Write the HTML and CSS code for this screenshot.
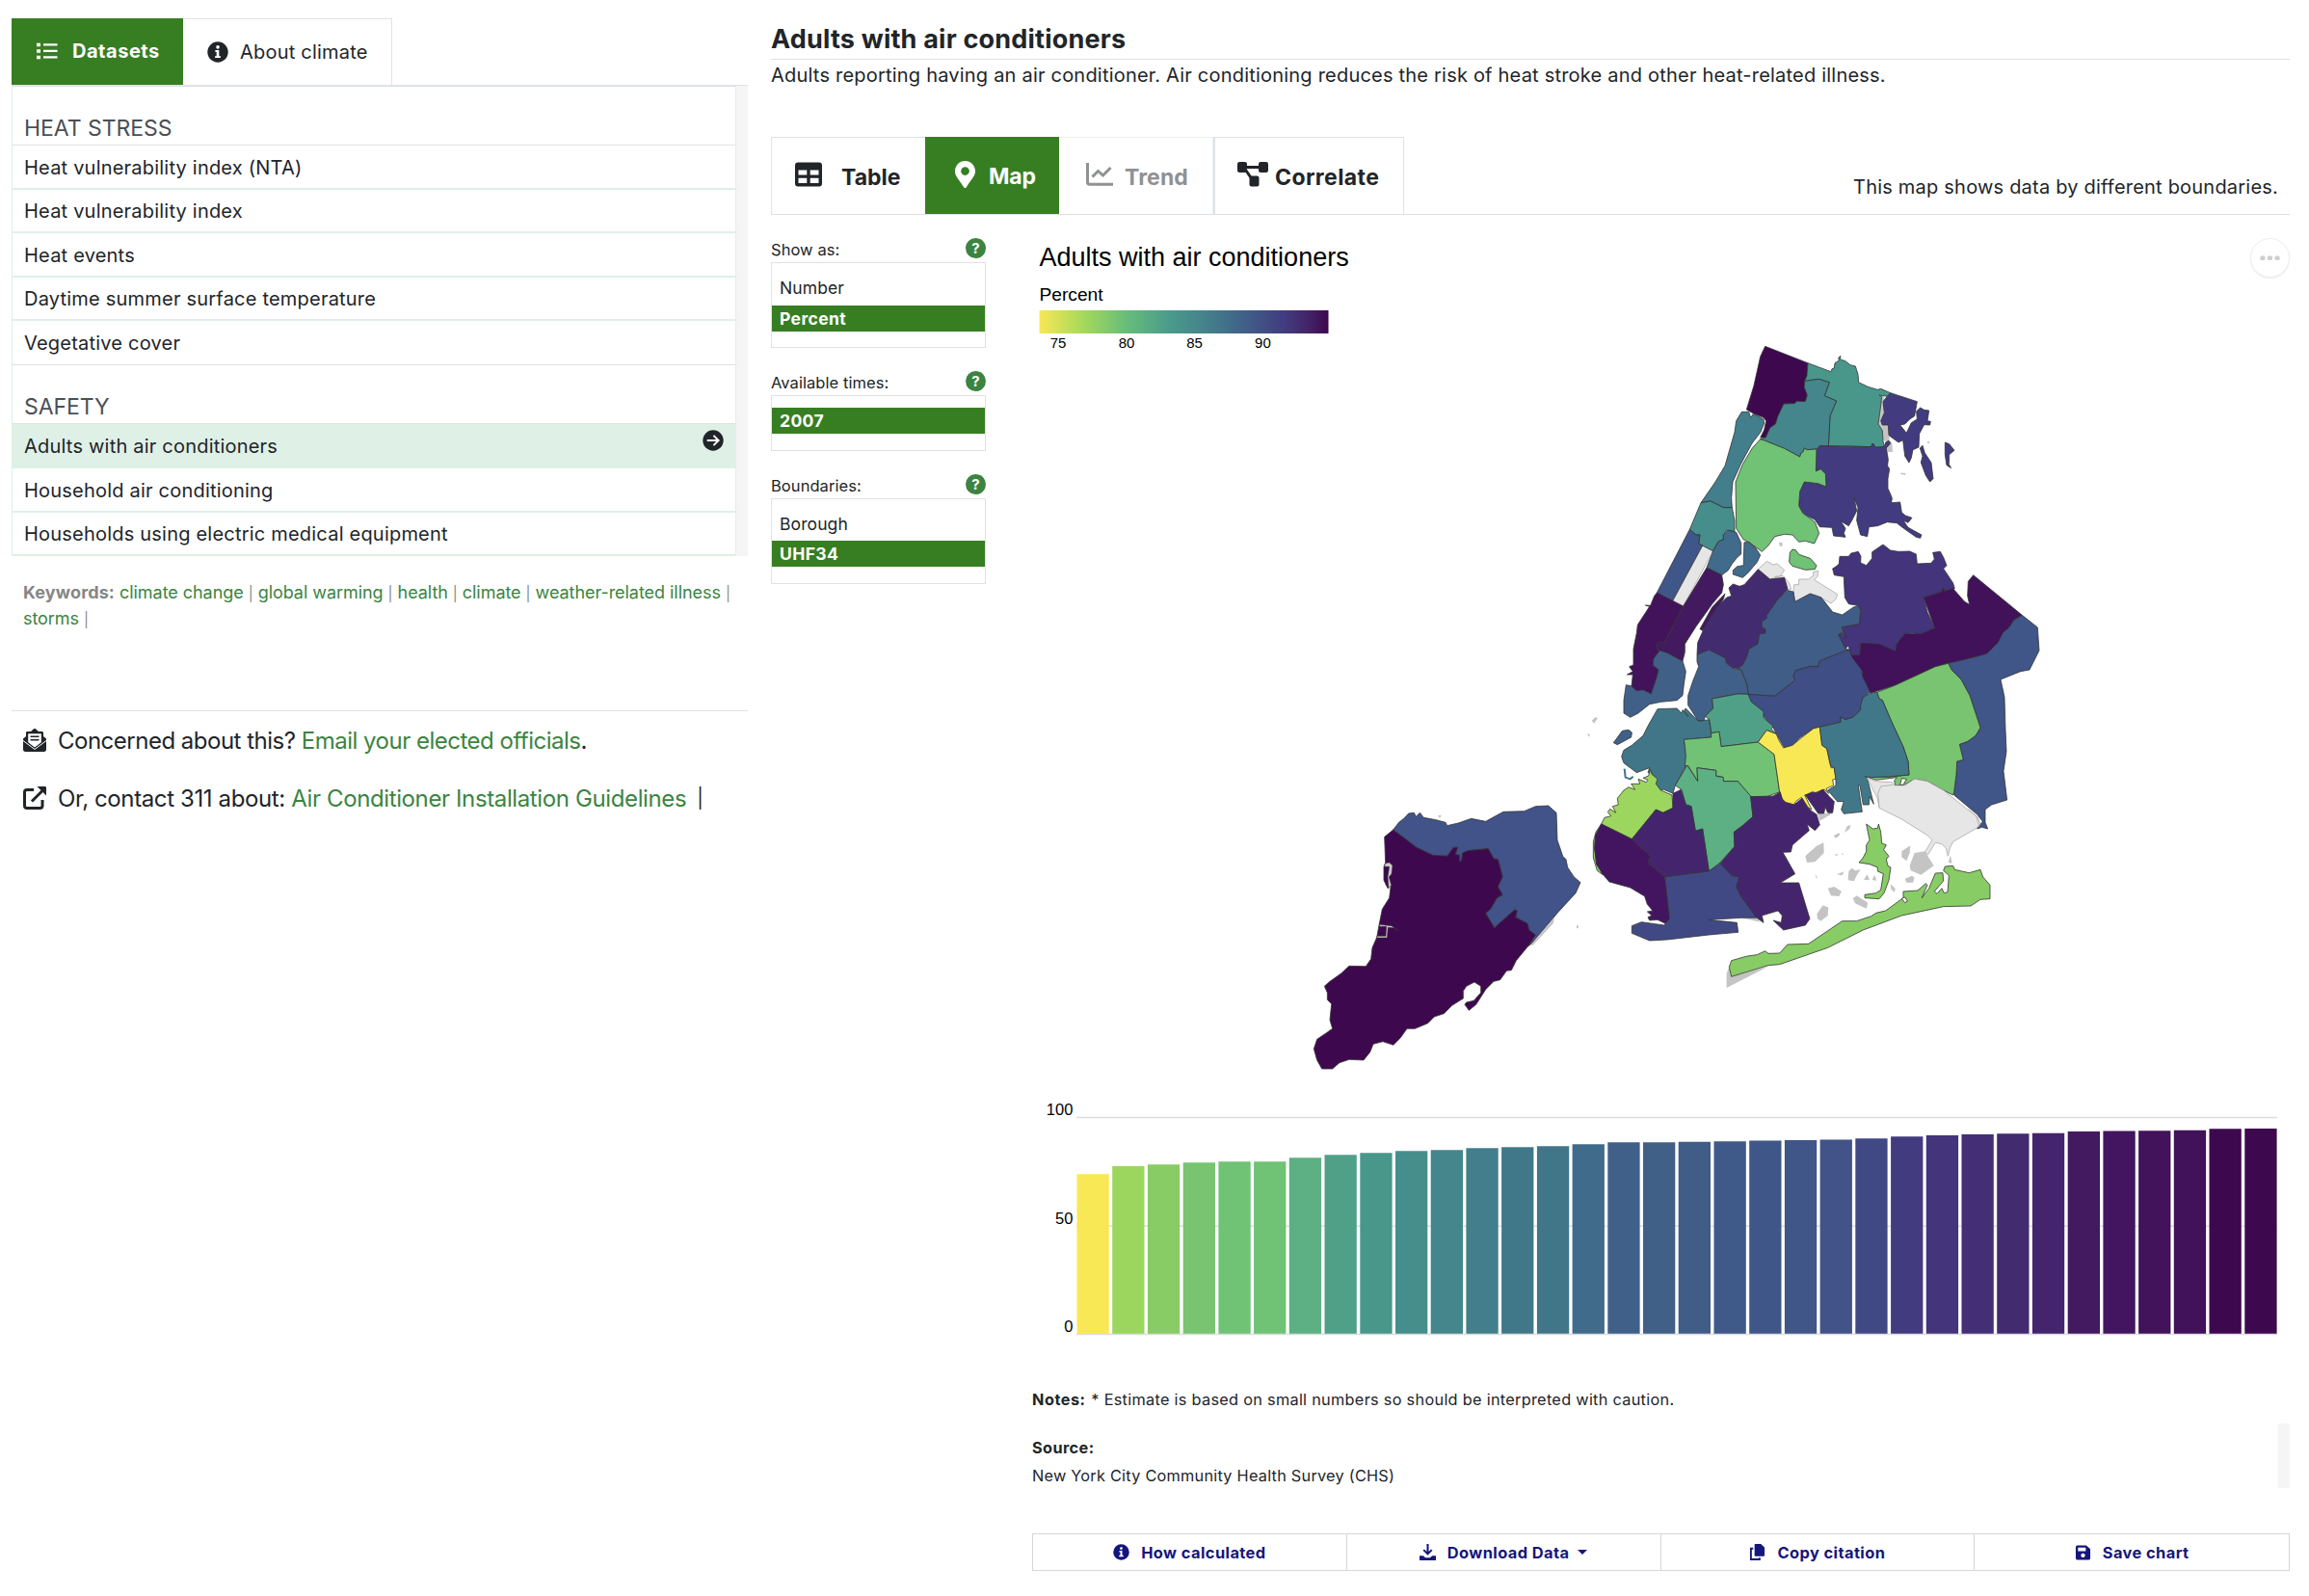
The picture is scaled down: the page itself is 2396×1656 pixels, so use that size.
FILE: index.html
```html
<!DOCTYPE html>
<html lang="en">
<head>
<meta charset="utf-8">
<title>Adults with air conditioners</title>
<link rel="stylesheet" href="styles.css">
</head>
<body>
<aside class="sidebar">
  <nav class="side-tabs">
    <a class="side-tab side-tab-active"><svg class="ic-list" viewBox="0 0 22 18"><path d="M0 .7h4v3.500H0zM0 7.200h4v3.500H0zM0 13.800h4v3.500H0zM7 1.200h14.500v2.300H7zM7 7.800h14.500v2.300H7zM7 14.300h14.500v2.300H7z" fill="currentColor"/></svg><span>Datasets</span></a>
    <a class="side-tab"><svg class="ic-info" viewBox="0 0 22 22"><circle cx="11" cy="11" r="10.7" fill="currentColor"/><path d="M8.4 9h3.900v6.200h1.600v1.900H8.100v-1.900h1.600v-4.300H8.400z" fill="#fff"/><circle cx="11" cy="5.9" r="1.8" fill="#fff"/></svg><span>About climate</span></a>
  </nav>
  <div class="dataset-scroll">
    <div class="dataset-list">
      <h4>HEAT STRESS</h4>
      <a class="row"><span>Heat vulnerability index (NTA)</span></a>
      <a class="row"><span>Heat vulnerability index</span></a>
      <a class="row"><span>Heat events</span></a>
      <a class="row"><span>Daytime summer surface temperature</span></a>
      <a class="row row-last"><span>Vegetative cover</span></a>
      <h4>SAFETY</h4>
      <a class="row row-active"><span>Adults with air conditioners</span><svg class="ic-go" viewBox="0 0 22 22"><circle cx="11" cy="11" r="10.7" fill="currentColor"/><path d="M4.700 11h11.500M11.400 5.900l5.200 5.100-5.200 5.100" fill="none" stroke="#fff" stroke-width="2"/></svg></a>
      <a class="row"><span>Household air conditioning</span></a>
      <a class="row"><span>Households using electric medical equipment</span></a>
    </div>
  </div>
  <p class="keywords"><b>Keywords:</b> <a>climate change</a> <i>|</i> <a>global warming</a> <i>|</i> <a>health</a> <i>|</i> <a>climate</a> <i>|</i> <a>weather-related illness</a> <i>|</i><br><a>storms</a> <i>|</i></p>
  <div class="contact">
    <p><svg class="ic-contact" viewBox="0 0 24 24"><path d="M0 10.4 3 8V4.500C3 3.300 3.800 3 4.600 3H8c1.200-.9 2.500-3 4-3s2.800 2.100 4 3h3.400c.8 0 1.600.3 1.600 1.500V8l3 2.400V21.500c0 1.500-.8 2.500-2.300 2.500H2.300C.8 24 0 23 0 21.500z" fill="currentColor"/><path d="M5.200 5.200h13.600v9L12 19.500l-6.800-5.300z" fill="#fff"/><path d="M7.500 8.200h9M7.500 11.800h9" stroke="currentColor" stroke-width="1.600"/><path d="m0 12.500 12 9 12-9" fill="none" stroke="#fff" stroke-width="1"/></svg><span>Concerned about this? <a>Email your elected officials</a>.</span></p>
    <p><svg class="ic-contact" viewBox="0 0 24 24"><path d="M11 3.500H4C2.300 3.500 1.500 4.400 1.500 6v14c0 1.700.8 2.500 2.500 2.500h13.500c1.700 0 2.500-.8 2.500-2.500v-6" fill="none" stroke="currentColor" stroke-width="3"/><path d="M9 15.500 20 4.500" stroke="currentColor" stroke-width="3"/><path d="M14.500 0h8C23.500 0 24 .6 24 1.500v8z" fill="currentColor"/></svg><span>Or, contact 311 about: <a>Air Conditioner Installation Guidelines</a></span><span class="bar">|</span></p>
  </div>
</aside>
<main class="main">
  <h1>Adults with air conditioners</h1>
  <p class="desc">Adults reporting having an air conditioner. Air conditioning reduces the risk of heat stroke and other heat-related illness.</p>
  <nav class="view-tabs">
    <a class="vt vt-table"><svg viewBox="0 0 28 26"><path fill-rule="evenodd" fill="currentColor" d="M3 .5h22a3 3 0 0 1 3 3v19a3 3 0 0 1-3 3H3a3 3 0 0 1-3-3v-19a3 3 0 0 1 3-3zM3.500 8.500v5h8.800v-5zM15.700 8.500v5h8.800v-5zM3.500 16.800V22h8.800v-5.200zM15.700 16.800V22h8.800v-5.200z"/></svg><span>Table</span></a>
    <a class="vt vt-map"><svg viewBox="0 0 384 512"><path fill="currentColor" d="M172.268 501.670C26.970 291.031 0 269.413 0 192 0 85.961 85.961 0 192 0s192 85.961 192 192c0 77.413-26.970 99.031-172.268 309.670-9.535 13.774-29.930 13.773-39.464 0zM192 272c44.183 0 80-35.817 80-80s-35.817-80-80-80-80 35.817-80 80 35.817 80 80 80z"/></svg><span>Map</span></a>
    <a class="vt vt-trend"><svg viewBox="0 0 28 24"><path d="M1.500 0v20c0 1.600.8 2.300 2.300 2.300H28" fill="none" stroke="currentColor" stroke-width="3"/><path d="m6.500 14.500 6-6 5 4.500L25.500 5" fill="none" stroke="currentColor" stroke-width="3"/></svg><span>Trend</span></a>
    <a class="vt vt-corr"><svg viewBox="0 0 32 26"><path d="M6 5.500h20M7 6l9.500 14" stroke="currentColor" stroke-width="3"/><rect y="0" width="10" height="11" rx="2.200" fill="currentColor"/><rect x="22" width="10" height="11" rx="2.200" fill="currentColor"/><rect x="12.500" y="14.500" width="10" height="11" rx="2.200" fill="currentColor"/></svg><span>Correlate</span></a>
    <span class="tab-note">This map shows data by different boundaries.</span>
  </nav>
  <div class="view">
    <div class="controls">
      <section><header><span>Show as:</span><i class="help">?</i></header><ul><li>Number</li><li class="sel">Percent</li></ul></section>
      <section class="times"><header><span>Available times:</span><i class="help">?</i></header><ul><li class="sel">2007</li></ul></section>
      <section class="bounds"><header><span>Boundaries:</span><i class="help">?</i></header><ul><li>Borough</li><li class="sel">UHF34</li></ul></section>
    </div>
    <div class="chart">
      <button class="menu"><svg viewBox="0 0 22 6"><circle cx="3" cy="3" r="2.800"/><circle cx="11" cy="3" r="2.800"/><circle cx="19" cy="3" r="2.800"/></svg></button>
      <svg class="viz" viewBox="1071 240 1305 1160">
        <defs><linearGradient id="ramp"><stop offset="0" stop-color="#f9e855"/><stop offset=".15" stop-color="#a6d95a"/><stop offset=".3" stop-color="#68bd7a"/><stop offset=".45" stop-color="#4a9b8a"/><stop offset=".6" stop-color="#437c8b"/><stop offset=".72" stop-color="#405d88"/><stop offset=".85" stop-color="#423b80"/><stop offset=".93" stop-color="#432468"/><stop offset="1" stop-color="#3e084f"/></linearGradient></defs>
        <text class="vz-title" x="1078.500" y="276">Adults with air conditioners</text>
        <text class="vz-sub" x="1078.500" y="312">Percent</text>
        <rect x="1078.500" y="322" width="300" height="24" fill="url(#ramp)"/>
        <g class="ticks"><text x="1098" y="361">75</text><text x="1169" y="361">80</text><text x="1239.500" y="361">85</text><text x="1310.400" y="361">90</text></g>

        <g class="land" transform="translate(1800 340) scale(.33333)">
          <path class="rock" d="M458 212 466 215 466 285 478 303 482 350 490 360 492 387 475 387 472 355 462 350 460 318 447 300 454 250zM138 668 148 668 149 680 140 680zM516 452 532 453 532 458 518 457zM600 354 607 355 606 360 600 359z"/>
          <path fill="#3e084f" d="M95 58 228 110 225 150 218 166 217 185 226 210 220 230 193 229 187 236 153 237 135 275 127 300 110 312 97 342 80 342 92 318 98 290 90 280 60 268 37 255 60 180 80 90z"/>
          <path fill="#48978a" d="M228 110 300 137 303 128 310 126 312 110 325 102 323 94 330 88 328 98 345 104 360 116 376 120 384 145 386 170 415 184 445 193 455 190 485 203 475 214 450 210 458 215 454 250 447 300 460 320 462 352 466 370 440 373 430 360 424 371 360 369 292 368 297 275 317 228 280 212 295 170 262 160 218 166 225 150z"/>
          <path fill="#44868c" d="M218 166 262 160 295 170 280 212 317 228 297 275 292 368 265 368 255 378 225 380 217 375 213 387 207 390 203 402 155 376 95 352 80 356 80 346 97 342 110 312 127 300 135 275 153 237 187 236 193 229 220 230 226 210 217 185z"/>
          <path fill="#423b80" d="M485 203 568 230 560 275 545 285 530 300 515 303 535 328 550 296 568 285 566 260 578 249 590 256 605 258 600 290 610 292 608 303 590 302 575 330 573 372 555 380 550 405 543 420 530 400 524 350 510 357 480 335 478 303 460 303 455 290 466 265 462 230 475 214zM585 367 592 390 612 420 615 445 618 470 608 480 595 460 580 420 585 400 577 375zM655 357 668 362 684 382 668 395 667 425 674 437 660 428 655 395z"/>
          <path fill="#423b80" d="M265 368 424 371 430 360 440 373 466 370 470 357 480 352 485 360 472 375 478 410 476 430 482 440 477 470 477 500 490 530 488 545 515 543 520 575 532 585 552 592 540 607 525 600 540 622 582 645 578 655 565 652 520 620 505 608 475 605 445 617 418 620 413 650 392 645 380 600 384 560 372 530 380 570 365 600 355 617 330 602 345 625 340 640 345 652 308 648 303 622 265 620 250 598 215 580 200 555 203 510 217 480 260 485 285 495 280 455 268 440 253 447 253 385z"/>
          <path fill="#70c275" d="M80 347 95 352 155 376 203 402 207 390 213 387 217 375 225 380 255 378 253 447 268 440 283 455 285 495 260 485 217 480 203 510 200 555 212 577 250 605 263 640 248 672 220 664 200 667 180 645 155 643 125 650 105 678 85 697 45 668 28 660 5 625 3 480 25 425 55 375z"/>
          <path fill="#70c275" d="M180 690 190 692 200 706 235 718 255 740 250 752 220 754 180 742 170 730 172 700z"/>
          <path fill="#427e8b" d="M22 262 44 262 50 280 58 268 90 285 92 297 81 325 54 360 19 425-6 480-10 530-8 560-35 560-75 540-105 545-60 480-30 430 0 325 5 290z"/>
          <path fill="#43347b" d="M305 750 318 742 325 735 327 712 355 712 363 702 385 697 393 712 392 732 410 740 428 718 428 698 462 675 485 693 510 697 545 696 565 705 568 735 612 733 622 720 617 700 640 697 650 715 660 740 650 750 680 795 685 812 654 820 650 810 644 822 588 840 600 885 623 935 580 955 555 950 530 952 502 985 500 1007 478 1003 430 985 390 983 392 1020 360 1020 355 990 345 1000 323 955 335 950 347 965 333 932 388 922 392 880 385 865 355 860 343 840 340 775 310 770z"/>
        </g>

        <g class="land" transform="translate(1900 540) scale(.33333)">
          <path fill="#41115a" d="M92 382 150 385 200 407 203 385 230 352 280 353 323 335 288 240 344 222 350 210 354 220 380 212 415 252 431 262 425 235 427 190 443 170 595 295 570 310 553 335 535 350 520 380 485 415 450 425 365 445 325 455 200 513 123 538 97 490 97 470 75 445 62 420 90 420z"/>
          <path fill="#405588" d="M595 295 643 333 648 405 618 465 590 470 528 495 540 550 543 650 546 720 537 780 548 870 500 885 480 900 480 940 488 960 470 955 455 960 472 937 455 915 383 855 383 845 390 790 392 750 412 745 400 697 425 688 450 670 465 645 432 545 405 495 385 480 365 445 450 425 485 415 520 380 535 350 553 335 570 310z"/>
          <path fill="#78c470" d="M143 535 200 513 325 455 365 445 375 465 405 495 432 545 465 645 450 670 425 688 400 697 412 745 392 750 390 790 383 845 380 855 350 840 300 812 260 805 230 822 200 825 197 810 205 800 140 808 105 796 180 799 243 792 240 750 225 705 190 630 160 560 150 555z"/>
        </g>

        <g class="land" transform="translate(1660 540) scale(.33333)">
          <path class="park" d="M493 152 520 127 540 138 553 135 575 155 560 175 530 183zM605 200 620 200 620 183 650 183 665 172 665 160 680 157 678 175 668 185 740 230 735 245 720 258 705 250 680 235 655 228 607 253 603 215zM545 175 570 172 590 195 596 215 585 217 580 195z"/>
          <path class="park" d="M320 78 353 95 260 267 228 250z"/>
          <path fill="#468e8b" d="M280 28 300 45 312 45 308 72 352 95 370 65 385 60 385 45 395 30 420 35 420 0 412-40 385-40 345-60 315-55z"/>
          <path fill="#3f5788" d="M280 28 300 45 312 45 308 72 320 78 227 250 178 225z"/>
          <path fill="#406b8b" d="M353 95 370 65 385 60 385 45 400 30 425 37 440 70 440 105 428 115 412 135 400 155 380 170 333 147zM450 68 465 68 485 85 500 108 490 130 460 165 445 178 415 168 415 155 428 143 448 140 448 115z"/>
          <path fill="#43195f" d="M333 147 380 170 385 200 380 225 350 260 300 330 265 385 265 410 258 438 215 415 187 405 178 400 180 380 200 380 220 345 260 267zM390 228 385 245 320 343 312 338 350 270z"/>
          <path fill="#42135b" d="M178 225 260 267 220 345 200 380 180 380 178 400 187 405 168 430 166 450 183 465 177 490 160 540 135 528 115 530 98 525 103 480 85 480 103 470 92 455 105 450 105 400 115 350 118 325 155 268 142 264 158 265 170 235z"/>
          <path fill="#406088" d="M187 405 205 410 258 438 268 470 262 510 258 545 240 560 190 565 155 572 120 600 95 613 75 600 75 560 82 512 98 515 115 530 135 528 160 540 177 490 183 465 166 450 168 430zM90 652 100 660 98 675 55 698 43 692 70 655z"/>
          <path fill="#432b70" d="M493 152 530 183 575 178 585 215 555 245 520 295 520 305 505 315 505 330 517 340 515 352 498 352 492 385 465 400 458 425 452 445 435 458 415 460 395 445 390 428 340 403 303 418 305 380 330 325 365 270 395 240 410 235 402 210 415 198 435 205 450 200z"/>
          <path fill="#405d88" d="M585 218 603 222 608 253 655 228 690 240 725 285 755 294 790 270 805 265 812 280 808 322 753 332 767 365 756 348 743 355 765 400 775 402 685 437 680 455 655 455 610 467 603 485 608 498 545 547 462 541 458 510 440 465 425 460 440 458 458 425 465 400 492 385 498 352 515 352 517 340 505 330 505 315 520 305 520 295 555 245z"/>
          <path fill="#404e86" d="M462 541 545 547 608 498 603 485 610 467 655 455 680 455 685 437 777 402 785 425 815 465 818 485 842 535 820 550 820 565 812 590 790 612 765 620 750 612 750 628 685 643 665 648 625 675 600 700 575 708 553 670 540 645 510 610 508 595 470 565z"/>
          <path fill="#40608a" d="M303 418 340 403 390 428 395 445 415 460 440 465 458 510 462 541 430 540 350 555 353 585 328 610 325 622 307 625 275 575 275 545 290 500 308 455 303 440z"/>
          <path fill="#50a088" d="M350 555 430 540 462 541 472 565 510 595 510 615 540 640 535 650 550 665 520 653 493 690 378 704 372 658 347 662 342 620 328 610 353 585z"/>
          <path fill="#417689" d="M180 587 240 585 255 600 258 590 275 610 262 592 268 585 307 625 340 620 347 662 347 675 262 682 265 700 270 735 268 765 235 825 228 850 200 838 187 838 175 820 165 790 150 785 155 770 115 785 75 755 68 735 75 715 100 700 135 670 150 640z"/>
          <path fill="#71c275" d="M262 682 347 675 347 662 372 658 378 704 493 690 543 728 560 845 520 860 470 860 430 812 385 812 382 798 362 795 362 778 303 770 305 812 275 763 265 765 268 735 265 700z"/>
          <path fill="#f9e855" d="M520 653 550 665 558 685 572 708 600 700 630 675 665 648 685 643 692 700 707 710 715 750 720 770 730 770 735 805 725 807 728 825 705 835 713 850 700 838 670 848 638 855 660 900 650 895 628 862 610 875 605 885 575 877 565 860 560 845 543 728 493 690z"/>
          <path fill="#417889" d="M685 643 750 628 750 612 765 620 790 612 812 590 812 575 820 550 850 535 863 535 870 555 880 560 910 630 945 705 960 750 963 792 905 797 845 800 825 797 833 803 853 883 840 860 838 885 820 885 810 825 805 825 817 907 760 913 752 900 760 875 740 875 710 840 735 825 735 805 730 770 720 765 707 710 692 700z"/>
          <path class="hook" d="M77 773 80 800 95 805 104 797"/>
        </g>

        <g class="land" transform="translate(1640 720) scale(.33333)">
          <path class="rock" d="M35 83 47 72 54 76 42 92zM20 124 30 126 28 134zM738 372 785 372 745 395zM500 697 545 697 560 710z"/>
          <path fill="#9cd65e" d="M218 235 222 250 240 265 235 280 250 300 285 315 288 355 257 370 235 360 160 452 65 405 75 385 95 380 85 368 92 358 110 370 100 350 118 345 115 325 135 300 150 290 170 298 158 280 185 280 180 265 205 275 210 268 195 262 212 255z"/>
          <path fill="#5cb083" d="M332 222 365 272 363 230 422 238 422 256 445 260 445 272 490 272 530 318 537 382 505 410 478 430 480 475 435 525 400 552 380 420 358 427 345 350 328 345 315 298 295 285z"/>
          <path fill="#44256d" d="M288 310 313 298 328 345 345 350 358 427 380 420 400 552 263 570 210 525 218 505 160 452 235 360 257 370 288 355z"/>
          <path fill="#88cc65" d="M65 405 47 440 44 480 50 530 68 550 68 562 52 550 40 510 40 460 48 430z"/>
          <path fill="#431560" d="M65 405 160 452 218 505 210 525 263 570 278 700 265 715 240 703 215 705 210 695 222 690 208 678 225 675 208 655 200 630 155 603 90 585 68 560 50 530 44 480 47 440z"/>
          <path fill="#414985" d="M263 570 400 552 435 527 470 565 495 570 485 600 500 630 548 697 500 697 400 703 487 712 491 742 400 750 270 765 215 768 160 745 160 722 190 710 260 720 278 700z"/>
          <path fill="#44256d" d="M530 320 600 318 622 305 628 328 640 338 665 345 690 325 705 350 720 365 735 375 745 408 730 425 705 405 712 425 660 470 655 492 630 493 668 560 622 588 680 588 714 700 700 720 632 735 600 705 625 712 628 690 615 675 565 690 570 712 548 697 500 630 485 600 495 570 470 565 435 527 480 475 478 430 505 410 537 382zM700 315 722 305 735 308 755 297 775 320 790 335 785 370 770 370 762 352 758 372 740 372z"/>
        </g>

        <g class="land" transform="translate(1760 780) scale(.33333)">
          <path class="rock" d="M103 670 110 700 225 668 95 735 95 690zM340 325 375 293 397 283 398 315 370 343 345 345zM428 262 445 252 447 260 435 269zM462 252 470 232 481 228 478 240zM410 425 430 420 453 435 445 450 420 448zM376 505 395 478 412 485 410 510 388 527 378 520zM488 457 500 448 535 470 530 488 495 472zM473 400 475 372 485 362 495 370 512 367 500 385 492 403zM438 382 460 373 455 385zM522 398 533 382 540 400zM548 398 556 383 562 402zM605 412 620 425 618 437 608 430zM640 310 667 292 665 315 655 340 640 328zM665 355 680 315 712 310 740 355 700 383 668 370zM650 395 672 386 680 392 675 407 655 407zM785 345 792 322 797 347zM370 380 378 392 374 394zM432 318 443 320 436 325zM452 316 460 318 456 321z"/>
          <path class="park" d="M533 83 560 92 610 95 617 105 650 105 680 85 720 92 770 120 845 180 878 205 885 225 870 240 800 280 790 300 784 325 778 300 765 287 745 283 722 320 712 313 735 275 720 260 640 210 570 175 565 145z"/>
          <path class="runway" d="M570 172 566 130 575 108 612 103M848 178 872 200 882 235"/>
          <path fill="#88cc65" d="M110 650 160 636 190 632 215 620 225 628 260 627 285 600 350 598 455 527 500 527 545 512 560 502 590 495 645 455 645 435 690 432 715 410 720 415 703 455 725 425 745 378 768 377 770 402 742 435 750 442 765 425 772 440 783 437 787 385 770 370 775 357 800 355 805 367 850 377 885 367 893 390 915 415 915 458 885 460 855 480 770 482 640 510 520 555 410 610 260 662 225 665 110 700 103 670zM530 225 550 240 565 238 568 225 575 250 578 285 592 290 584 305 600 325 592 335 597 355 606 360 600 400 585 440 570 458 525 455 525 445 560 440 575 430 583 380 565 372 565 360 540 350 507 345 520 330 530 310 530 290 540 275z"/>
          <path class="islet" d="M640 457 650 453 658 465 650 470zM640 83 655 85 645 103 635 103z"/>
        </g>

        <g class="land" transform="translate(1340 810) scale(.33333)">
          <path class="rock" d="M456 108 467 108 462 117zM888 450 894 451 893 460 888 459zM745 512 820 425 815 445 752 512z"/>
          <path fill="#415388" d="M317 153 335 130 350 118 365 102 382 100 388 112 400 100 412 115 450 122 480 130 485 140 520 132 560 118 605 127 660 97 725 95 760 80 800 78 825 100 828 185 845 235 855 245 860 270 880 300 900 317 885 350 830 410 745 510 737 515 760 480 740 465 735 445 698 425 703 405 695 402 632 458 605 413 620 400 640 365 657 355 643 330 657 300 650 270 643 245 630 243 613 212 565 216 550 218 533 225 530 250 523 250 523 232 510 230 518 208 505 208 485 235 440 232 390 208z"/>
          <path fill="#3e084f" d="M317 153 390 208 440 232 485 235 505 208 518 208 510 230 523 232 523 250 530 250 533 225 550 218 613 212 630 243 643 245 650 270 657 300 643 330 657 355 640 365 620 400 605 413 632 458 695 402 703 405 698 425 735 445 740 465 760 480 737 515 700 560 685 590 670 592 650 620 630 625 605 650 575 697 553 715 540 697 545 690 568 685 590 660 590 640 570 627 545 640 535 655 535 678 500 700 475 725 445 735 425 755 385 772 360 772 340 800 318 823 285 812 255 820 245 845 225 870 180 868 150 878 128 897 95 897 80 870 70 835 80 805 105 788 128 772 120 745 125 695 112 682 112 660 103 640 120 625 155 600 180 577 232 578 248 555 252 520 266 488 273 450 283 400 305 365 310 325 300 335 288 310 288 268 293 255 290 175z"/>
          <path class="creek" d="M293 257 305 255 315 264 312 290 304 300 311 325 303 335 300 300 305 268 289 267zM267 489 298 489 301 457 320 458 335 468 312 452 275 448 275 454 296 454 294 484 267 484z"/>
        </g>

        <path class="grid" d="M1117 1159.500H2363M1117 1272.300H2363"/>
        <g class="bars">
          <path fill="#f9e855" d="M1117.500 1384V1218.300h33.300V1384z"/><path fill="#9cd65e" d="M1154.200 1384V1210h33.300V1384z"/><path fill="#88cc65" d="M1190.900 1384V1208.300h33.300V1384z"/><path fill="#78c470" d="M1227.700 1384V1206.300h33.300V1384z"/><path fill="#70c275" d="M1264.400 1384V1205.300h33.300V1384z"/><path fill="#70c275" d="M1301.100 1384V1205.300h33.300V1384z"/><path fill="#5cb083" d="M1337.800 1384V1201.300h33.300V1384z"/><path fill="#50a088" d="M1374.500 1384V1198.300h33.300V1384z"/><path fill="#48978a" d="M1411.300 1384V1196.300h33.300V1384z"/><path fill="#468e8b" d="M1448 1384V1194.300h33.300V1384z"/><path fill="#44868c" d="M1484.700 1384V1193.300h33.300V1384z"/><path fill="#427e8b" d="M1521.400 1384V1191.300h33.300V1384z"/><path fill="#417889" d="M1558.100 1384V1190.300h33.300V1384z"/><path fill="#417689" d="M1594.900 1384V1189.300h33.300V1384z"/><path fill="#406b8b" d="M1631.600 1384V1187.300h33.300V1384z"/><path fill="#40608a" d="M1668.300 1384V1185.300h33.300V1384z"/><path fill="#406088" d="M1705 1384V1185.300h33.300V1384z"/><path fill="#405d88" d="M1741.700 1384V1184.700h33.300V1384z"/><path fill="#3f5a88" d="M1778.500 1384V1184.200h33.300V1384z"/><path fill="#3f5788" d="M1815.200 1384V1183.600h33.300V1384z"/><path fill="#405588" d="M1851.900 1384V1183.100h33.300V1384z"/><path fill="#415388" d="M1888.600 1384V1182.400h33.300V1384z"/><path fill="#414985" d="M1925.300 1384V1181.300h33.300V1384z"/><path fill="#423b80" d="M1962.100 1384V1179.300h33.300V1384z"/><path fill="#43347b" d="M1998.800 1384V1178h33.300V1384z"/><path fill="#432f75" d="M2035.500 1384V1177h33.300V1384z"/><path fill="#432b70" d="M2072.200 1384V1176.200h33.300V1384z"/><path fill="#44256d" d="M2108.900 1384V1175.700h33.300V1384z"/><path fill="#43195f" d="M2145.700 1384V1174h33.300V1384z"/><path fill="#431560" d="M2182.400 1384V1173.400h33.300V1384z"/><path fill="#42135b" d="M2219.100 1384V1173.200h33.300V1384z"/><path fill="#41115a" d="M2255.800 1384V1172.700h33.300V1384z"/><path fill="#3e084f" d="M2292.500 1384V1171.200h33.300V1384z"/><path fill="#3e084f" d="M2329.300 1384V1171h33.300V1384z"/>
        </g>
        <path class="grid" d="M1117 1384.500H2363"/>
        <g class="axis"><text x="1113.400" y="1157">100</text><text x="1113.400" y="1269.500">50</text><text x="1113.400" y="1382">0</text></g>
      </svg>
      <p class="notes"><b>Notes:</b> <span>* Estimate is based on small numbers so should be interpreted with caution.</span></p>
      <div class="source"><b>Source:</b><br><span>New York City Community Health Survey (CHS)</span></div>
      <div class="actions">
        <a><svg viewBox="0 0 22 22"><circle cx="11" cy="11" r="10.700" fill="currentColor"/><path d="M8.400 9h3.900v6.200h1.600v1.900H8.100v-1.900h1.600v-4.300H8.400z" fill="#fff"/><circle cx="11" cy="5.900" r="1.800" fill="#fff"/></svg><span>How calculated</span></a>
        <a><svg viewBox="0 0 18 18"><path d="M9 0v10M4.500 6.500 9 11l4.500-4.500" fill="none" stroke="currentColor" stroke-width="2.200"/><path d="M0 13h4l2.500 2.200h5L14 13h4v5H0z" fill="currentColor"/></svg><span>Download Data</span><i class="caret"></i></a>
        <a><svg viewBox="0 0 18 18"><path d="M7 0h6l4 4v8.500a1 1 0 0 1-1 1H7a1 1 0 0 1-1-1V1a1 1 0 0 1 1-1z" fill="currentColor"/><path d="M4.500 5H2v12h9.500v-2" fill="none" stroke="currentColor" stroke-width="2"/></svg><span>Copy citation</span></a>
        <a><svg viewBox="0 0 18 18"><path fill-rule="evenodd" fill="currentColor" d="M3 1.500h9.500L17 5.500V15.500a2 2 0 0 1-2 2H3a2 2 0 0 1-2-2v-12a2 2 0 0 1 2-2zM3.500 4v4h8.500V4zM9 10.300a2.300 2.300 0 1 0 .01 0z"/></svg><span>Save chart</span></a>
      </div>
    </div>
  </div>
</main>
</body>
</html>
```
FILE: styles.css
```css
* { box-sizing: border-box; }
body { margin: 0; width: 2396px; height: 1656px; overflow: hidden; background: #fff; color: #212529; font-family: Inter, "Liberation Sans", sans-serif; font-size: 20px; letter-spacing: .21px; display: flex; gap: 24px; padding: 19px 20px 0 12px; }
h1, h4, p, ul { margin: 0; padding: 0; font-weight: 400; }
a { text-decoration: none; }
svg { display: block; flex: none; }
span { white-space: nowrap; }

.sidebar { width: 764px; flex: none; }
.side-tabs { display: flex; height: 70px; border-bottom: 1px solid #dee2e6; }
.side-tab { display: flex; align-items: center; border: 1px solid #dee2e6; border-bottom: 0; border-left: 0; width: 217px; padding: 0 0 0 25px; }
.side-tab-active { background: #377e22; color: #fff; font-weight: 700; width: 178px; border: 0; padding: 0 0 2px 26px; letter-spacing: .52px; }
.ic-list { width: 22px; height: 18px; margin-right: 15px; }
.ic-info { width: 22px; height: 22px; margin-right: 12px; }
.dataset-scroll { background: #f5f5f5; padding-right: 12px; height: 488px; }
.dataset-list { background: #fff; border: 1px solid #dee2e6; border-bottom: 0; height: 488px; border-color: #dee2e6 #dff0e6; }
.dataset-list h4 { height: 61px; padding: 28px 0 0 12px; line-height: 30px; font-size: 23px; letter-spacing: -.04px; color: #495057; border-bottom: 1px solid #dee2e6; }
.row { display: flex; align-items: center; justify-content: space-between; height: 45.5px; padding: 1.5px 12px 0; border-bottom: 2px solid #dff0e6; }
.row-last { border-bottom: 1px solid #dee2e6; }
.row-active { background: #dff0e6; height: 46.5px; }
.ic-go { width: 22px; height: 22px; margin-top: -11px; }
.keywords { padding: 24px 0 0 12px; font-size: 18px; line-height: 27px; letter-spacing: -.05px; color: #868686; white-space: nowrap; }
.keywords b { letter-spacing: .12px; }
.keywords i { font-style: normal; font-size: 15px; line-height: 1; }
.keywords a, .contact a { color: #3b8441; }
.contact { margin-top: 82px; border-top: 1px solid #dee2e6; padding: 11px 0 0 12px; font-size: 24px; letter-spacing: -.5px; }
.contact p { display: flex; align-items: center; height: 38px; margin-bottom: 22px; }
.contact p + p { letter-spacing: -.38px; }
.ic-contact { width: 24px; height: 24px; margin-right: 12px; }
.bar { margin-left: 11px; font-size: 20px; }

.main { width: 1576px; flex: none; }
h1 { height: 43px; border-bottom: 1px solid #dee2e6; font-size: 27px; line-height: 43px; font-weight: 700; }
.desc { height: 80px; line-height: 32px; }
.view-tabs { display: flex; height: 81px; border-bottom: 1px solid #dee2e6; font-size: 23px; font-weight: 700; }
.vt { display: flex; align-items: center; border: 1px solid #dee2e6; border-bottom: 0; padding-top: 2px; letter-spacing: 0; }
.vt-table { width: 160px; padding-left: 24px; border-right: 0; }
.vt-table svg { width: 28px; height: 26px; margin: -5px 20px 0 0; }
.vt-map { width: 139px; background: #377e22; color: #fff; border: 0; padding-left: 31px; letter-spacing: -.19px; }
.vt-map svg { width: 21px; height: 28px; margin: -5px 14px 0 0; }
.vt-trend { width: 160px; color: #8f9193; border-left: 0; border-color: #eef0f2; padding-left: 28px; letter-spacing: .12px; }
.vt-trend svg { width: 28px; height: 24px; margin: -5px 12px 0 0; }
.vt-corr { width: 198px; border-left-width: 2px; padding-left: 23px; letter-spacing: .4px; }
.vt-corr svg { width: 32px; height: 26px; margin: -5px 7px 0 0; }
.tab-note { margin-left: auto; padding: 36px 12px 0 0; font-size: 20px; font-weight: 400; line-height: 32px; }
.view { display: flex; }
.controls { width: 223px; padding-top: 22px; font-size: 17.5px; letter-spacing: .1px; flex: none; }
.controls header { display: flex; align-items: center; justify-content: space-between; height: 27px; font-size: 16.5px; letter-spacing: .06px; }
.help { width: 21px; height: 21px; margin-top: -2px; border-radius: 50%; background: #3b8441; color: #fff; font: 700 15px/21px Inter, sans-serif; text-align: center; }
.controls ul { list-style: none; border: 1px solid #dee2e6; height: 89px; padding-top: 12px; }
.controls li { height: 32px; line-height: 27px; padding: 0 0 0 8px; }
.controls .sel { height: 27px; line-height: 28px; background: #377e22; color: #fff; font-weight: 700; letter-spacing: .4px; }
.controls section { height: 138px; }
.controls .times { height: 107px; }
.controls .times ul { height: 58px; }
.controls .bounds li:first-child { height: 31px; }

.chart { width: 1305px; margin-left: 48px; position: relative; padding-top: 17px; }
.menu { position: absolute; right: 0; top: 24px; width: 41px; height: 41px; border-radius: 50%; border: 1px solid #eee; background: #fff; padding: 0 9px; fill: #cfcfcf; box-shadow: 0 1px 2px #eee; }
.viz { width: 1305px; height: 1160px; font-family: "Liberation Sans", sans-serif; letter-spacing: 0; }
.vz-title { font-size: 27px; }
.vz-sub { font-size: 19.2px; }
.ticks { font-size: 15px; text-anchor: middle; }
.axis { font-size: 16.5px; text-anchor: end; }
.grid { stroke: #ddd; stroke-width: 1.5; }
.land path { stroke: #343434; stroke-width: 2.4; stroke-linejoin: round; }
.land .rock { fill: #c4c4c4; stroke: none; }
.land .creek { fill: #ccc; stroke-width: 1.5; }
.land .park { fill: #e6e6e6; stroke: #aaa; }
.land .runway { fill: none; stroke: #aaa; }
.land .hook { fill: none; stroke: #417689; stroke-width: 6; }
.land .islet { fill: #fff; }
.notes { margin-top: 36px; font-size: 16.3px; line-height: 32px; letter-spacing: .29px; }
.notes b { letter-spacing: .5px; margin-right: 1px; }
.source { height: 67px; margin-top: 9px; padding-top: 11px; border-right: 12px solid #f5f5f5; font-size: 16.3px; line-height: 29px; letter-spacing: .24px; }
.source b { letter-spacing: .4px; }
.actions { display: grid; grid-template-columns: repeat(4, 1fr); height: 39px; margin-top: 47px; border: 1px solid #d4d6d8; color: #15157d; font-size: 16.4px; font-weight: 700; letter-spacing: .43px; }
.actions a { display: flex; align-items: center; justify-content: center; gap: 12px; border-right: 1px solid #d4d6d8; }
.actions a:last-child { border: 0; }
.actions svg { width: 17px; height: 17px; }
.caret { border: 5px solid transparent; border-top-color: #15157d; border-bottom: 0; margin-left: -3px; }
```
